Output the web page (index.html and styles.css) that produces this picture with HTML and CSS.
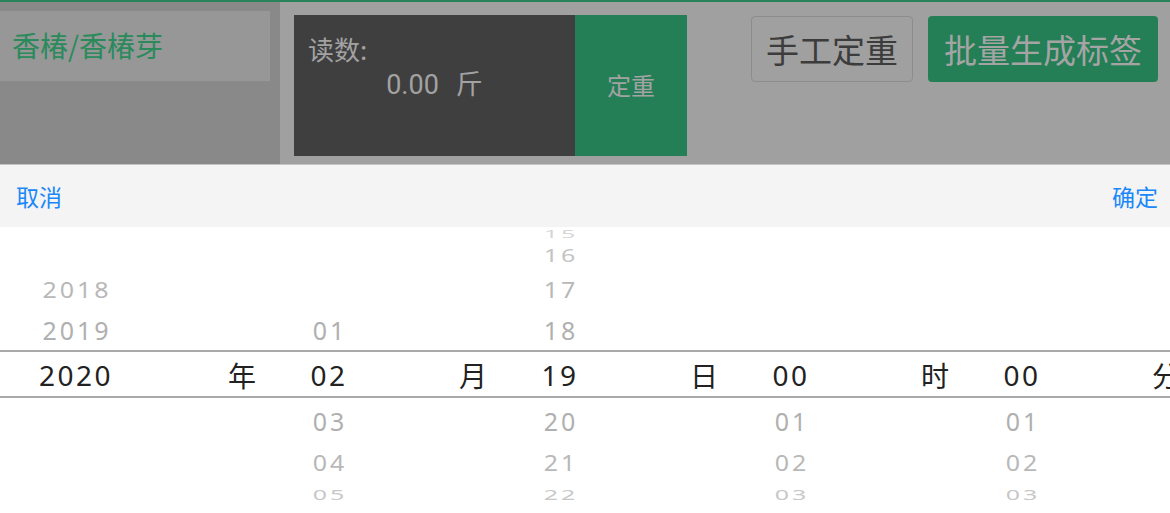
FILE: index.html
```html
<!DOCTYPE html>
<html lang="zh-CN">
<head>
<meta charset="utf-8">
<title>定重</title>
<link rel="stylesheet" href="styles.css">
</head>
<body>
<div class="top-line"></div>
<header class="header">
  <aside class="side">
    <div class="side-item">香椿/香椿芽</div>
  </aside>
  <main class="main">
    <section class="scale">
      <div class="reading">
        <div class="reading-label">读数:</div>
        <div class="reading-value">0.00<span class="reading-unit">斤</span></div>
      </div>
      <div class="tare">定重</div>
    </section>
    <div class="actions">
      <button class="btn btn-outline">手工定重</button>
      <button class="btn btn-primary">批量生成标签</button>
    </div>
  </main>
</header>
<div class="toolbar">
  <span class="tb-btn">取消</span>
  <span class="tb-btn">确定</span>
</div>
<div class="picker">
  <div class="row r-m4">
    <div class="cell cell-year"><span class="num"></span></div>
    <div class="cell"><span class="num"></span></div>
    <div class="cell"><span class="num">15</span></div>
    <div class="cell"><span class="num"></span></div>
    <div class="cell"><span class="num"></span></div>
  </div>
  <div class="row r-m3">
    <div class="cell cell-year"><span class="num"></span></div>
    <div class="cell"><span class="num"></span></div>
    <div class="cell"><span class="num">16</span></div>
    <div class="cell"><span class="num"></span></div>
    <div class="cell"><span class="num"></span></div>
  </div>
  <div class="row r-m2">
    <div class="cell cell-year"><span class="num">2018</span></div>
    <div class="cell"><span class="num"></span></div>
    <div class="cell"><span class="num">17</span></div>
    <div class="cell"><span class="num"></span></div>
    <div class="cell"><span class="num"></span></div>
  </div>
  <div class="row r-m1">
    <div class="cell cell-year"><span class="num">2019</span></div>
    <div class="cell"><span class="num">01</span></div>
    <div class="cell"><span class="num">18</span></div>
    <div class="cell"><span class="num"></span></div>
    <div class="cell"><span class="num"></span></div>
  </div>
  <div class="row r-sel">
    <div class="cell cell-year"><span class="num">2020</span><span class="unit">年</span></div>
    <div class="cell"><span class="num">02</span><span class="unit">月</span></div>
    <div class="cell"><span class="num">19</span><span class="unit">日</span></div>
    <div class="cell"><span class="num">00</span><span class="unit">时</span></div>
    <div class="cell"><span class="num">00</span><span class="unit">分</span></div>
  </div>
  <div class="row r-p1">
    <div class="cell cell-year"><span class="num"></span></div>
    <div class="cell"><span class="num">03</span></div>
    <div class="cell"><span class="num">20</span></div>
    <div class="cell"><span class="num">01</span></div>
    <div class="cell"><span class="num">01</span></div>
  </div>
  <div class="row r-p2">
    <div class="cell cell-year"><span class="num"></span></div>
    <div class="cell"><span class="num">04</span></div>
    <div class="cell"><span class="num">21</span></div>
    <div class="cell"><span class="num">02</span></div>
    <div class="cell"><span class="num">02</span></div>
  </div>
  <div class="row r-p3">
    <div class="cell cell-year"><span class="num"></span></div>
    <div class="cell"><span class="num">05</span></div>
    <div class="cell"><span class="num">22</span></div>
    <div class="cell"><span class="num">03</span></div>
    <div class="cell"><span class="num">03</span></div>
  </div>
  <div class="row r-p4">
    <div class="cell cell-year"><span class="num"></span></div>
    <div class="cell"><span class="num">06</span></div>
    <div class="cell"><span class="num">23</span></div>
    <div class="cell"><span class="num">04</span></div>
    <div class="cell"><span class="num">04</span></div>
  </div>
</div>
</body>
</html>
```

FILE: styles.css
```css
* { box-sizing: border-box; }
html, body {
  margin: 0;
  padding: 0;
}
body {
  width: 1170px;
  height: 513px;
  overflow: hidden;
  background: #ffffff;
  font-family: "Noto Sans", "Noto Sans CJK SC", sans-serif;
}

.top-line {
  height: 2px;
  background: #27835a;
}

.header {
  display: flex;
  height: 163px;
  border-bottom: 1px solid #c4c4c4;
}

.side {
  width: 280px;
  background: #898989;
  padding-top: 9px;
}
.side-item {
  width: 270px;
  height: 70px;
  background: #979797;
  color: #2a8a5b;
  font-family: "Noto Sans CJK SC", sans-serif;
  font-size: 28px;
  padding-left: 12px;
  padding-bottom: 2px;
  display: flex;
  align-items: center;
}

.main {
  flex: 1;
  background: #a0a0a0;
  display: flex;
  align-items: flex-start;
  padding: 13px 12px 0 14px;
}

.scale {
  display: flex;
  height: 141px;
}
.reading {
  width: 281px;
  background: #3f3f3f;
  color: #a2a2a2;
  font-family: "Noto Sans CJK SC", sans-serif;
  padding: 17px 0 0 14px;
}
.reading-label {
  font-size: 26px;
  line-height: 34px;
}
.reading-value {
  font-family: "Roboto", "Noto Sans CJK SC", sans-serif;
  font-size: 27px;
  line-height: 36px;
  margin-top: -1px;
  text-align: center;
  padding-right: 14px;
}
.reading-unit {
  font-family: "Noto Sans CJK SC", sans-serif;
  margin-left: 17px;
}
.tare {
  width: 112px;
  background: #247f57;
  color: #a3a3a3;
  font-family: "Noto Sans CJK SC", sans-serif;
  font-size: 24px;
  padding-bottom: 2px;
  display: flex;
  align-items: center;
  justify-content: center;
}

.actions {
  margin-left: auto;
  display: flex;
  gap: 15px;
  padding-top: 1px;
}
.btn {
  height: 66px;
  font-family: "Noto Sans CJK SC", sans-serif;
  font-size: 33px;
  border-radius: 4px;
  padding: 0;
  display: flex;
  align-items: center;
  justify-content: center;
}
.btn-outline {
  width: 162px;
  background: #a0a0a0;
  border: 1px solid #8c8c8c;
  color: #3c3c3c;
}
.btn-primary {
  width: 230px;
  background: #247f57;
  border: none;
  color: #a4a4a4;
  font-size: 33px;
}

.toolbar {
  height: 62px;
  background: #f4f4f4;
  display: flex;
  justify-content: space-between;
  align-items: center;
  padding: 0 12px 0 16px;
}
.tb-btn {
  font-family: "Noto Sans CJK SC", sans-serif;
  font-size: 23px;
  color: #1a88f8;
}

.picker {
  display: flex;
  flex-direction: column;
}
.row {
  display: flex;
  align-items: center;
  padding-left: 25px;
  overflow: hidden;
  flex: 0 0 auto;
  width: 1200px;
}
.cell {
  flex: 0 0 231px;
  display: flex;
  align-items: center;
}
.num {
  width: 146px;
  text-align: center;
  display: inline-block;
}
.cell-year .num {
  width: 102px;
}
.unit {
  margin-left: auto;
  font-family: "Noto Sans CJK SC", sans-serif;
  font-size: 28px;
  color: #222;
}

.row .num {
  font-size: 25px;
  letter-spacing: 3px;
  text-indent: 2px;
  line-height: 30px;
}
.r-m4 { height: 14px; }
.r-m3 { height: 28px; }
.r-m2 { height: 40px; }
.r-m1 { height: 41px; }
.r-sel {
  height: 48px;
  padding-top: 2px;
  border-top: 2px solid #a9a9a9;
  border-bottom: 2px solid #a9a9a9;
}
.r-p1 { height: 46px; }
.r-p2 { height: 36px; }
.r-p3 { height: 28px; }
.r-p4 { height: 20px; }

.r-m4 .num { transform: scaleY(0.42); color: #d6d6d6; }
.r-m3 .num { transform: scaleY(0.7); color: #c4c4c4; }
.r-m2 .num { transform: scaleY(0.85); color: #b8b8b8; }
.r-m1 .num { color: #b0b0b0; }
.r-p1 .num { color: #b0b0b0; }
.r-p2 .num { transform: scaleY(0.85); color: #b8b8b8; }
.r-p3 .num { transform: scaleY(0.58); color: #c8c8c8; }
.r-p4 .num { transform: scaleY(0.35); color: #dcdcdc; }

.row.r-sel .num {
  font-size: 28px;
  letter-spacing: 2.5px;
  text-indent: 0;
  color: #222;
}
.r-sel .cell-year .num {
  width: 102px;
}
```
